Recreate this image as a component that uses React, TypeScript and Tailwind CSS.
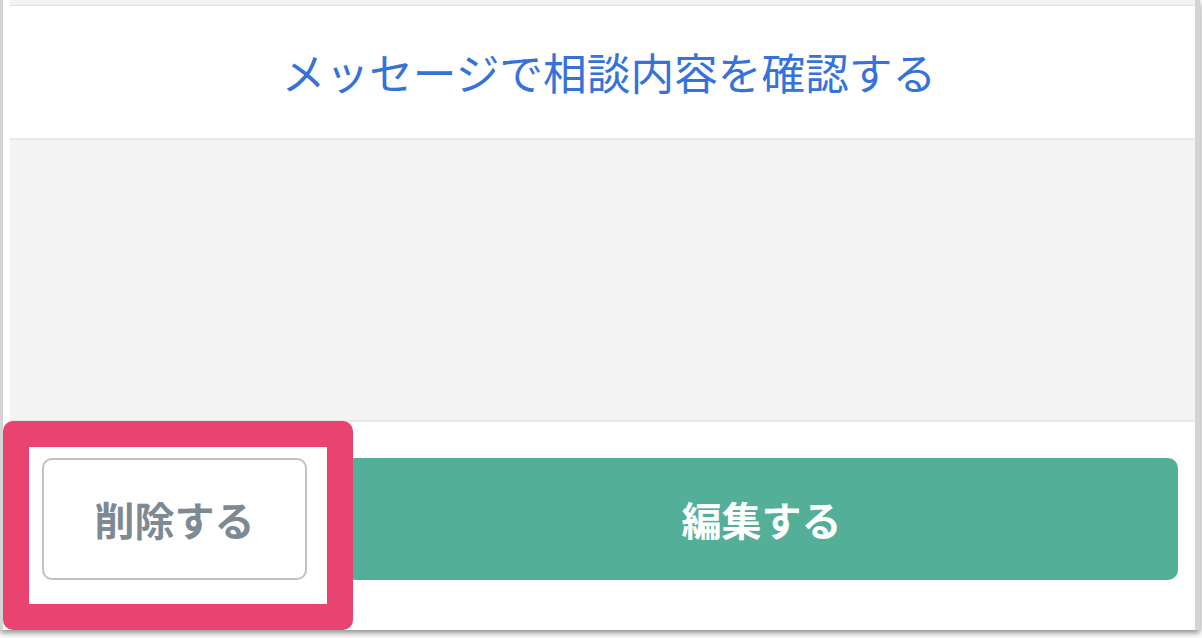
export default function App() {
  return (
    <div className="relative h-[638px] w-[1202px] overflow-hidden bg-white font-['Noto_Sans_CJK_JP',sans-serif]">
      <div className="flex h-[630px] w-[1200px] flex-col border-l-[3px] border-r-[5px] border-[#d4d4d4] bg-white shadow-[0_3px_6px_rgba(0,0,0,0.45)]">
        <div className="ml-[7px] h-[6px] shrink-0 border-b border-[#e3e3e3] bg-[#f3f3f3]" />
        <div className="flex h-[132px] shrink-0 items-center justify-center pl-[20px]">
          <span className="text-[43.7px] leading-none text-[#3572d9]">メッセージで相談内容を確認する</span>
        </div>
        <div className="ml-[7px] h-[284px] shrink-0 border-y-2 border-[#e8e8e8] bg-[#f4f4f4]" />
        <div className="flex flex-1 items-start pl-[39px] pr-[17px] pt-[36px]">
          <button className="flex h-[122px] w-[265px] items-center justify-center rounded-[10px] border-2 border-[#bcc3c7] bg-white text-[40px] font-bold text-[#7d8a93]">
            削除する
          </button>
          <button className="ml-[38px] flex h-[122px] flex-1 items-center justify-center rounded-[10px] bg-[#54af99] text-[40px] font-bold text-white">
            編集する
          </button>
        </div>
      </div>
      <div className="absolute left-[3px] top-[421px] h-[209px] w-[350px] rounded-[10px] border-[26px] border-[#e9446f]" />
    </div>
  )
}
